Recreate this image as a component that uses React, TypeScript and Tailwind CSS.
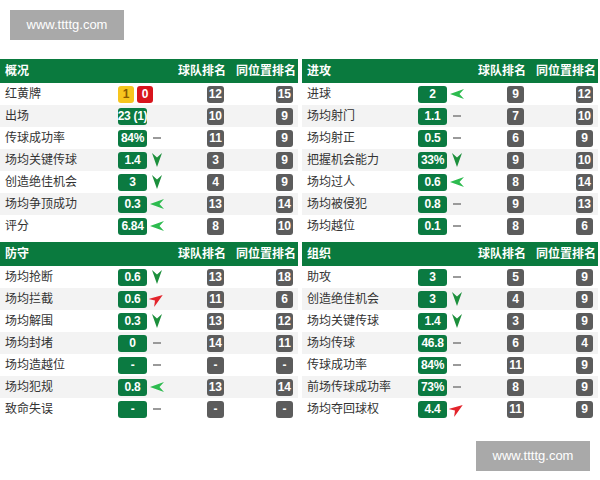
import React from "react";

type Trend = "down" | "left" | "red" | "dash" | "none";
type Row = { label: string; value: string; trend: Trend; team: string; pos: string; cards?: [string, string] };
type Section = { title: string; rows: Row[] };

const sections: Section[] = [
  {
    title: "概况",
    rows: [
      { label: "红黄牌", value: "", trend: "none", team: "12", pos: "15", cards: ["1", "0"] },
      { label: "出场", value: "23 (1)", trend: "none", team: "10", pos: "9" },
      { label: "传球成功率", value: "84%", trend: "dash", team: "11", pos: "9" },
      { label: "场均关键传球", value: "1.4", trend: "down", team: "3", pos: "9" },
      { label: "创造绝佳机会", value: "3", trend: "down", team: "4", pos: "9" },
      { label: "场均争顶成功", value: "0.3", trend: "left", team: "13", pos: "14" },
      { label: "评分", value: "6.84", trend: "left", team: "8", pos: "10" },
    ],
  },
  {
    title: "进攻",
    rows: [
      { label: "进球", value: "2", trend: "left", team: "9", pos: "12" },
      { label: "场均射门", value: "1.1", trend: "dash", team: "7", pos: "10" },
      { label: "场均射正", value: "0.5", trend: "dash", team: "6", pos: "9" },
      { label: "把握机会能力", value: "33%", trend: "down", team: "9", pos: "10" },
      { label: "场均过人", value: "0.6", trend: "left", team: "8", pos: "14" },
      { label: "场均被侵犯", value: "0.8", trend: "dash", team: "9", pos: "13" },
      { label: "场均越位", value: "0.1", trend: "dash", team: "8", pos: "6" },
    ],
  },
  {
    title: "防守",
    rows: [
      { label: "场均抢断", value: "0.6", trend: "down", team: "13", pos: "18" },
      { label: "场均拦截", value: "0.6", trend: "red", team: "11", pos: "6" },
      { label: "场均解围", value: "0.3", trend: "down", team: "13", pos: "12" },
      { label: "场均封堵", value: "0", trend: "dash", team: "14", pos: "11" },
      { label: "场均造越位", value: "-", trend: "dash", team: "-", pos: "-" },
      { label: "场均犯规", value: "0.8", trend: "left", team: "13", pos: "14" },
      { label: "致命失误", value: "-", trend: "dash", team: "-", pos: "-" },
    ],
  },
  {
    title: "组织",
    rows: [
      { label: "助攻", value: "3", trend: "dash", team: "5", pos: "9" },
      { label: "创造绝佳机会", value: "3", trend: "down", team: "4", pos: "9" },
      { label: "场均关键传球", value: "1.4", trend: "down", team: "3", pos: "9" },
      { label: "场均传球", value: "46.8", trend: "dash", team: "6", pos: "4" },
      { label: "传球成功率", value: "84%", trend: "dash", team: "11", pos: "9" },
      { label: "前场传球成功率", value: "73%", trend: "dash", team: "8", pos: "9" },
      { label: "场均夺回球权", value: "4.4", trend: "red", team: "11", pos: "9" },
    ],
  },
];

// arrowhead pointing up, rotated per trend
const Arrow = ({ color, rotate }: { color: string; rotate: string }) => (
  <svg width="10" height="14" viewBox="0 0 10 14" className={rotate}>
    <polygon points="5,0 10,14 5,9.5 0,14" fill={color} />
  </svg>
);

const TrendIcon = ({ trend }: { trend: Trend }) => {
  if (trend === "down") return <Arrow color="#1c8f3c" rotate="rotate-180" />;
  if (trend === "left") return <Arrow color="#2dbb4f" rotate="-rotate-90" />;
  if (trend === "red") return <Arrow color="#e3232b" rotate="rotate-[55deg]" />;
  if (trend === "dash") return <div className="h-[2px] w-[8px] bg-[#9a9a9a]" />;
  return null;
};

const Rank = ({ v }: { v: string }) => (
  <span className="inline-flex h-[17px] min-w-[17px] items-center justify-center rounded-[3px] bg-[#5c5c5c] px-[2px] text-[12px] font-bold leading-none text-white">
    {v}
  </span>
);

const StatTable = ({ section, labelW }: { section: Section; labelW: string }) => (
  <div className="flex flex-col">
    <div className="flex h-[24px] items-center bg-[#0a7a3e] pr-[2px] text-[12px] font-bold text-white">
      <div className="flex-1 pl-[5px]">{section.title}</div>
      <div className="w-[72px] text-right">球队排名</div>
      <div className="w-[70px] text-right">同位置排名</div>
    </div>
    {section.rows.map((r, i) => (
      <div
        key={r.label}
        className={`flex h-[22px] items-center pr-[5px] text-[12px] text-[#333] ${i % 2 === 1 ? "bg-[#f3f3f3]" : "bg-white"}`}
      >
        <div className={`${labelW} shrink-0 pl-[5px]`}>{r.label}</div>
        {r.cards ? (
          <div className="flex w-[37px] shrink-0 gap-[3px]">
            <span className="inline-flex h-[17px] w-[16px] items-center justify-center rounded-[3px] bg-[#f7c51e] text-[12px] font-bold text-[#8a5a00]">
              {r.cards[0]}
            </span>
            <span className="inline-flex h-[17px] w-[16px] items-center justify-center rounded-[3px] bg-[#d8141c] text-[12px] font-bold text-white">
              {r.cards[1]}
            </span>
          </div>
        ) : (
          <span className="inline-flex h-[17px] w-[29px] shrink-0 items-center justify-center whitespace-nowrap rounded-[3px] bg-[#0b7a41] text-[12px] font-bold leading-none tracking-[-0.3px] text-white">
            {r.value}
          </span>
        )}
        <div className="flex w-[18px] shrink-0 items-center justify-center pl-[2px]">
          {!r.cards && <TrendIcon trend={r.trend} />}
        </div>
        <div className="flex flex-1 justify-end pr-[2px]">
          <Rank v={r.team} />
        </div>
        <div className="flex w-[67px] justify-end">
          <Rank v={r.pos} />
        </div>
      </div>
    ))}
  </div>
);

export default function App() {
  return (
    <div className="h-[480px] w-[600px] bg-white font-['Liberation_Sans','Noto_Sans_CJK_SC',sans-serif]">
      <div className="pl-[10px] pt-[10px]">
        <div className="flex h-[30px] w-[114px] items-center justify-center bg-[#a9a9a9] text-[13px] text-white">
          www.ttttg.com
        </div>
      </div>
      <div className="mt-[19px] grid grid-cols-[298px_296px] gap-x-[4px] gap-y-[5px]">
        {sections.map((s, i) => (
          <StatTable key={s.title} section={s} labelW={i % 2 === 0 ? "w-[118px]" : "w-[116px]"} />
        ))}
      </div>
      <div className="mt-[21px] flex justify-end pr-[10px]">
        <div className="flex h-[30px] w-[114px] items-center justify-center bg-[#a9a9a9] text-[13px] text-white">
          www.ttttg.com
        </div>
      </div>
    </div>
  );
}
